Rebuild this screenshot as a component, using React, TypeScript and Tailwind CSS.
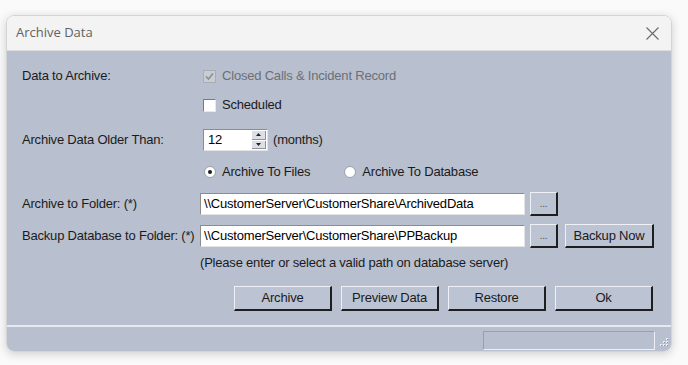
import React from "react";

const font = { fontFamily: '"Liberation Sans", Arial, sans-serif' };

function Btn({ children, className = "" }: { children?: React.ReactNode; className?: string }) {
  return (
    <button
      type="button"
      className={
        "flex items-center justify-center bg-[#bcc3d2] text-[13px] tracking-[-0.2px] text-[#1b1b1b] border-t border-l border-t-[#eef0f5] border-l-[#eef0f5] border-r-2 border-b-2 border-r-[#1e1e1e] border-b-[#1e1e1e] " +
        className
      }
    >
      {children}
    </button>
  );
}

function TextBox({ value }: { value: string }) {
  return (
    <div className="flex items-center w-[325px] h-[22px] bg-white border-t border-l border-t-[#8c8c8c] border-l-[#8c8c8c] border-r border-b border-r-[#e4e4e4] border-b-[#e4e4e4] pl-[3px] text-[13px] tracking-[-0.2px] text-black whitespace-nowrap">
      {value}
    </div>
  );
}

function Row({ label, children, className = "" }: { label?: string; children?: React.ReactNode; className?: string }) {
  return (
    <div className={"flex items-center " + className}>
      <div className="w-[178px] text-[13px] tracking-[-0.2px] text-[#1b1b1b] shrink-0 whitespace-nowrap">{label}</div>
      <div className="flex items-center">{children}</div>
    </div>
  );
}

export default function App() {
  return (
    <div className="w-[688px] h-[365px] bg-[#fafafa] pt-[15px] pl-[6px]" style={font}>
      <div className="w-[666px] h-[337px] rounded-lg overflow-hidden border border-[#d4d4d4] shadow-[0_2px_10px_rgba(0,0,0,0.18)] flex flex-col">
        {/* title bar */}
        <div className="h-[35px] shrink-0 bg-[#f3f3f3] border-b border-[#dcdcdc] flex items-center justify-between pl-[9px] pr-[11px]">
          <span className="text-[13px] text-[#626262]" style={{ fontFamily: '"Open Sans", "Noto Sans", sans-serif' }}>
            Archive Data
          </span>
          <svg width="15" height="15" viewBox="0 0 15 15">
            <path d="M1.5 1.5 L13.5 13.5 M13.5 1.5 L1.5 13.5" stroke="#6a6a6a" strokeWidth="1.1" fill="none" />
          </svg>
        </div>

        {/* body */}
        <div className="flex-1 bg-[#b8bfcf] flex flex-col pl-[15px] text-[13px] tracking-[-0.2px]">
          <Row label="Data to Archive:" className="h-[22px] mt-[14px]">
            <div className="ml-[3px] w-[13px] h-[13px] bg-[#c9ccd2] border border-[#a9adb5] flex items-center justify-center">
              <svg width="9" height="9" viewBox="0 0 9 9">
                <path d="M1 4.5 L3.5 7 L8 1.5" stroke="#8a8d93" strokeWidth="1.6" fill="none" />
              </svg>
            </div>
            <span className="ml-[6px] text-[#6c6f76] whitespace-nowrap">Closed Calls &amp; Incident Record</span>
          </Row>

          <Row className="h-[22px] mt-[7px]">
            <div className="ml-[3px] w-[13px] h-[13px] bg-white border-t border-l border-t-[#7a7a7a] border-l-[#7a7a7a] border-r border-b border-r-[#e8e8e8] border-b-[#e8e8e8]" />
            <span className="ml-[6px] text-[#1b1b1b]">Scheduled</span>
          </Row>

          <Row label="Archive Data Older Than:" className="h-[22px] mt-[13px]">
            <div className="ml-[3px] flex w-[65px] h-[22px] bg-white border-t border-l border-t-[#8c8c8c] border-l-[#8c8c8c] border-r border-b border-r-[#e4e4e4] border-b-[#e4e4e4]">
              <div className="flex-1 flex items-center pl-[4px] text-black">12</div>
              <div className="w-[16px] flex flex-col p-[1px] gap-[1px]">
                <div className="flex-1 bg-[#dcdfe5] border-r border-b border-[#8f939a] flex items-center justify-center">
                  <svg width="5" height="3" viewBox="0 0 5 3"><path d="M0 3 L2.5 0 L5 3 Z" fill="#222" /></svg>
                </div>
                <div className="flex-1 bg-[#dcdfe5] border-r border-b border-[#8f939a] flex items-center justify-center">
                  <svg width="5" height="3" viewBox="0 0 5 3"><path d="M0 0 L2.5 3 L5 0 Z" fill="#222" /></svg>
                </div>
              </div>
            </div>
            <span className="ml-[5px] text-[#1b1b1b]">(months)</span>
          </Row>

          <Row className="h-[22px] mt-[10px]">
            <div className="ml-[4px] w-[12px] h-[12px] rounded-full bg-white border border-[#9aa0aa] flex items-center justify-center">
              <div className="w-[4px] h-[4px] rounded-full bg-[#1b1b1b]" />
            </div>
            <span className="ml-[6px] text-[#1b1b1b]">Archive To Files</span>
            <div className="ml-[34px] w-[12px] h-[12px] rounded-full bg-white border border-[#9aa0aa]" />
            <span className="ml-[6px] text-[#1b1b1b]">Archive To Database</span>
          </Row>

          <Row label="Archive to Folder: (*)" className="h-[24px] mt-[9px]">
            <TextBox value="\\CustomerServer\CustomerShare\ArchivedData" />
            <Btn className="ml-[5px] w-[28px] h-[24px] !text-[10px] !text-[#555]">...</Btn>
          </Row>

          <Row label="Backup Database to Folder: (*)" className="h-[24px] mt-[8px]">
            <TextBox value="\\CustomerServer\CustomerShare\PPBackup" />
            <Btn className="ml-[5px] w-[28px] h-[24px] !text-[10px] !text-[#555]">...</Btn>
            <Btn className="ml-[7px] w-[89px] h-[24px]">Backup Now</Btn>
          </Row>

          <Row className="h-[18px] mt-[6px]">
            <span className="text-[#1b1b1b] whitespace-nowrap">(Please enter or select a valid path on database server)</span>
          </Row>

          <div className="flex mt-[14px] ml-[212px] gap-[9px]">
            <Btn className="w-[98px] h-[25px]">Archive</Btn>
            <Btn className="w-[98px] h-[25px]">Preview Data</Btn>
            <Btn className="w-[98px] h-[25px]">Restore</Btn>
            <Btn className="w-[98px] h-[25px]">Ok</Btn>
          </div>
        </div>

        {/* status bar */}
        <div className="h-[26px] shrink-0 bg-[#b8bfcf] border-t-2 border-[#e6e9f0] flex items-center justify-end pr-[2px]">
          <div className="w-[172px] h-[19px] border-t border-l border-t-[#9aa0ab] border-l-[#9aa0ab] border-r border-b border-r-[#eef0f4] border-b-[#eef0f4] mt-[2px]" />
          <svg width="12" height="12" viewBox="0 0 12 12" className="ml-[2px] mt-[8px]">
            <g fill="#eef0f4">
              <rect x="9" y="1" width="2" height="2" />
              <rect x="6" y="4" width="2" height="2" />
              <rect x="9" y="4" width="2" height="2" />
              <rect x="3" y="7" width="2" height="2" />
              <rect x="6" y="7" width="2" height="2" />
              <rect x="9" y="7" width="2" height="2" />
            </g>
            <g fill="#8d939e">
              <rect x="10" y="2" width="1" height="1" />
              <rect x="7" y="5" width="1" height="1" />
              <rect x="10" y="5" width="1" height="1" />
              <rect x="4" y="8" width="1" height="1" />
              <rect x="7" y="8" width="1" height="1" />
              <rect x="10" y="8" width="1" height="1" />
            </g>
          </svg>
        </div>
      </div>
    </div>
  );
}
